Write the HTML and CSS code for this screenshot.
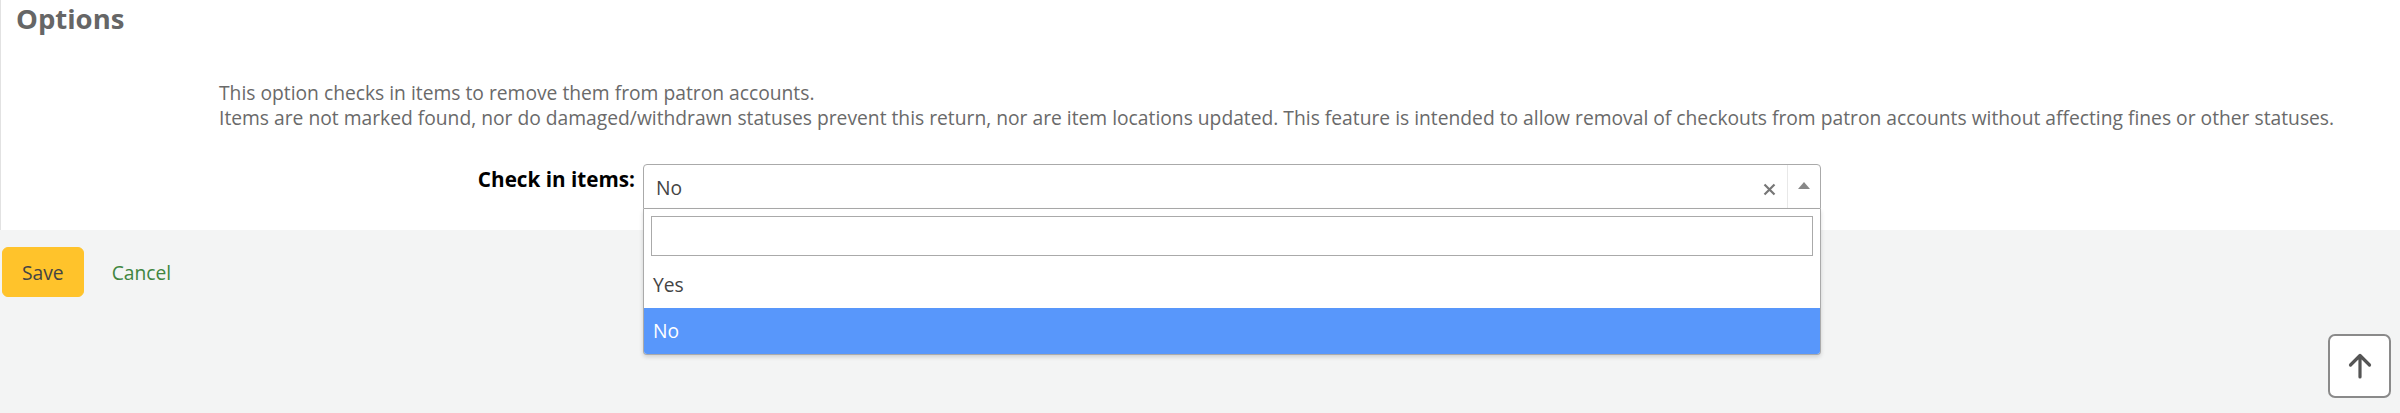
FILE: index.html
```html
<!DOCTYPE html>
<html lang="en">
<head>
    <meta charset="UTF-8">
    <meta name="viewport" content="width=device-width, initial-scale=1.0">
    <title>Options</title>
    <link rel="stylesheet" href="styles.css">
</head>
<body>
    <div class="panel">
        <h2 class="title">Options</h2>
        <div class="hint">
            <div>This option checks in items to remove them from patron accounts.</div>
            <div>Items are not marked found, nor do damaged/withdrawn statuses prevent this return, nor are item locations updated. This feature is intended to allow removal of checkouts from patron accounts without affecting fines or other statuses.</div>
        </div>
        <div class="field">
            <label class="field-label">Check in items:</label>
            <div class="select2">
                <div class="selection">
                    <span class="rendered">No</span>
                    <span class="clear">
                        <svg width="13" height="13" viewBox="0 0 13 13"><path d="M1.5 1.5l10 10M11.5 1.5l-10 10" stroke="#777" stroke-width="2.2" fill="none"/></svg>
                    </span>
                    <span class="arrow"><b></b></span>
                </div>
                <div class="dropdown">
                    <div class="search"><input type="text"></div>
                    <ul class="results">
                        <li>Yes</li>
                        <li class="highlighted">No</li>
                    </ul>
                </div>
            </div>
        </div>
    </div>
    <div class="actions">
        <button class="btn-save">Save</button>
        <a href="#" class="cancel">Cancel</a>
    </div>
    <a href="#" class="totop">
        <svg width="28" height="28" viewBox="0 0 28 28"><path d="M14 25V4M4.5 13L14 3.5 23.5 13" stroke="#555" stroke-width="3.2" stroke-linecap="round" stroke-linejoin="round" fill="none"/></svg>
    </a>
</body>
</html>
```

FILE: styles.css
```css
html, body {
    margin: 0;
    height: 100%;
}
body {
    background: #f3f4f4;
    font-family: "Open Sans", "Liberation Sans", sans-serif;
    font-size: 19.25px;
    color: #333;
}
.panel {
    background: #fff;
    height: 230px;
    border-left: 1px solid #e2e2e2;
    box-sizing: border-box;
}
.title {
    margin: 0;
    padding: 2px 0 0 15px;
    font-size: 27.5px;
    line-height: 34px;
    color: #666;
}
.hint {
    margin: 44px 0 0 218px;
    line-height: 25px;
    color: #6a6a6a;
}
.field {
    display: flex;
    margin-top: 34px;
}
.field-label {
    width: 634px;
    box-sizing: border-box;
    padding-top: 4px;
    text-align: right;
    font-size: 20.7px;
    line-height: 23px;
    font-weight: 700;
    color: #000;
}
.select2 {
    position: relative;
    width: 1178px;
    margin-left: 8px;
}
.selection {
    display: flex;
    align-items: center;
    height: 45px;
    box-sizing: border-box;
    border: 1px solid #aaa;
    border-radius: 4px 4px 0 0;
}
.rendered {
    flex: 1;
    padding: 3px 0 0 12px;
    line-height: 40px;
    color: #444;
}
.clear {
    width: 30px;
    margin-right: 3px;
    padding-top: 5px;
    display: flex;
    justify-content: center;
}
.arrow {
    width: 32px;
    height: 100%;
    border-left: 1px solid #e8e8e8;
    display: flex;
    align-items: center;
    justify-content: center;
}
.arrow b {
    width: 0;
    height: 0;
    border-left: 6px solid transparent;
    border-right: 6px solid transparent;
    border-bottom: 7px solid #888;
    margin-top: -3px;
}
.dropdown {
    position: absolute;
    left: 0;
    right: 0;
    top: 100%;
    background: #fff;
    border: 1px solid #aaa;
    border-top: none;
    border-radius: 0 0 4px 4px;
    box-shadow: 0 2px 4px rgba(0, 0, 0, .15);
    overflow: hidden;
}
.search {
    padding: 7px 7px 6px;
}
.search input {
    display: block;
    width: 100%;
    height: 40px;
    box-sizing: border-box;
    margin: 0;
    border: 1px solid #aaa;
}
.results {
    list-style: none;
    margin: 0;
    padding: 0;
}
.results li {
    height: 46px;
    line-height: 46px;
    padding-left: 9px;
    color: #444;
}
.results .highlighted {
    background: #5897fb;
    color: #fff;
}
.actions {
    display: flex;
    align-items: center;
    padding: 17px 0 0 2px;
}
.btn-save {
    height: 50px;
    padding: 0 19px;
    background: #ffc32b;
    border: 1px solid #ffc32b;
    border-radius: 6px;
    font: inherit;
    color: #444;
}
.cancel {
    margin-left: 28px;
    color: #408540;
    text-decoration: none;
}
.totop {
    position: fixed;
    right: 9px;
    top: 334px;
    width: 63px;
    height: 64px;
    box-sizing: border-box;
    border: 2px solid #8a8a8a;
    border-radius: 7px;
    background: #fff;
    display: flex;
    align-items: center;
    justify-content: center;
}
```
